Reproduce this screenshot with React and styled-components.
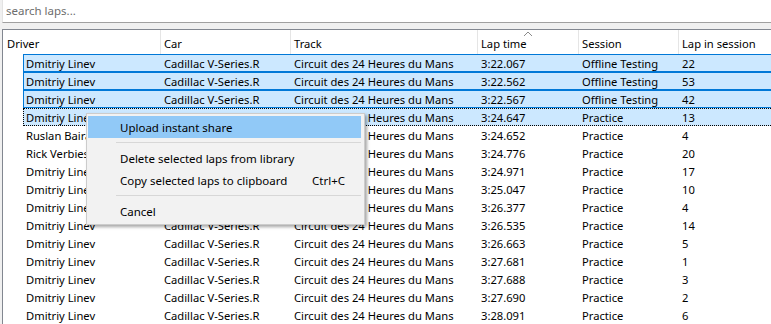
import React from "react";
import styled, { createGlobalStyle, css } from "styled-components";

const GlobalStyle = createGlobalStyle`
  html, body { margin: 0; padding: 0; }
  body {
    background: #f0f0f0;
    font-family: "Noto Sans", "Open Sans", sans-serif;
    font-size: 11.2px;
    color: #000;
    overflow: hidden;
    width: 771px;
    height: 324px;
  }
`;

const Page = styled.div`
  position: relative;
  display: flex;
  flex-direction: column;
  gap: 6px;
  width: 771px;
  height: 324px;
  overflow: hidden;
`;

const Search = styled.input`
  box-sizing: border-box;
  height: 23px;
  margin: 0 0 0 2px;
  padding: 0 3px 1px;
  border: none;
  border-left: 1px solid #e3e3e3;
  border-bottom: 1px solid #a0a0a0;
  background: #fff;
  font: inherit;
  font-size: 11.5px;
  outline: none;
  &::placeholder { color: #6d6d6d; }
`;

const Table = styled.div`
  flex: 1;
  margin-left: 2px;
  border-top: 1px solid #828790;
  border-left: 1px solid #828790;
  background: #fff;
  display: flex;
  flex-direction: column;
  min-width: 900px;
`;

const cols = (first) => `${first}px 130px 187px 101px 100px 1fr`;

const HeaderRow = styled.div`
  display: grid;
  grid-template-columns: ${cols(158)};
  height: 24px;
`;

const HeaderCell = styled.div`
  position: relative;
  display: flex;
  align-items: center;
  padding-left: ${(p) => (p.$first ? 4 : 3)}px;
  padding-top: 2px;
  border-right: 1px solid #e5e5e5;
  white-space: nowrap;
`;

const SortArrow = styled.svg`
  position: absolute;
  top: 1px;
  left: 50%;
  margin-left: -5px;
`;

const Rows = styled.div`
  display: flex;
  flex-direction: column;
  padding-left: 20px;
`;

const Row = styled.div`
  box-sizing: border-box;
  display: grid;
  grid-template-columns: ${cols(138)};
  height: 18px;
  border: 1px solid transparent;
  border-right: none;
  ${(p) =>
    p.$selected &&
    css`
      background: #cce8ff;
      border-color: #0078d7;
    `}
  ${(p) =>
    p.$focused &&
    css`
      border: 1px dotted #000;
      border-right: none;
    `}
`;

const Cell = styled.div`
  display: flex;
  align-items: center;
  padding-left: 2px;
  padding-top: 1px;
  white-space: nowrap;
  overflow: hidden;
  line-height: 15px;
`;

const Menu = styled.div`
  position: absolute;
  left: 86px;
  top: 113px;
  width: 279px;
  box-sizing: border-box;
  background: #f2f2f2;
  border: 1px solid #cccccc;
  padding: 2px 3px 2px 1px;
  box-shadow: 2px 2px 3px rgba(0, 0, 0, 0.35);
  display: flex;
  flex-direction: column;
`;

const MenuItem = styled.div`
  display: flex;
  align-items: center;
  justify-content: space-between;
  height: 22px;
  padding: 0 0 0 32px;
  font-size: 11.5px;
  background: ${(p) => (p.$active ? "#91c9f7" : "transparent")};
`;

const Shortcut = styled.span`
  width: 49px;
`;

const Separator = styled.div`
  height: 9px;
  display: flex;
  align-items: center;
  padding-left: 28px;
  &::after {
    content: "";
    flex: 1;
    height: 1px;
    background: #d7d7d7;
  }
`;

const data = [
  ["Dmitriy Linev", "3:22.067", "Offline Testing", "22", true],
  ["Dmitriy Linev", "3:22.562", "Offline Testing", "53", true],
  ["Dmitriy Linev", "3:22.567", "Offline Testing", "42", true],
  ["Dmitriy Linev", "3:24.647", "Practice", "13", true, true],
  ["Ruslan Bairamov", "3:24.652", "Practice", "4"],
  ["Rick Verbiest", "3:24.776", "Practice", "20"],
  ["Dmitriy Linev", "3:24.971", "Practice", "17"],
  ["Dmitriy Linev", "3:25.047", "Practice", "10"],
  ["Dmitriy Linev", "3:26.377", "Practice", "4"],
  ["Dmitriy Linev", "3:26.535", "Practice", "14"],
  ["Dmitriy Linev", "3:26.663", "Practice", "5"],
  ["Dmitriy Linev", "3:27.681", "Practice", "1"],
  ["Dmitriy Linev", "3:27.688", "Practice", "3"],
  ["Dmitriy Linev", "3:27.690", "Practice", "2"],
  ["Dmitriy Linev", "3:28.091", "Practice", "6"],
];

const headers = ["Driver", "Car", "Track", "Lap time", "Session", "Lap in session"];

export default function App() {
  return (
    <Page>
      <GlobalStyle />
      <Search placeholder="search laps..." />
      <Table>
        <HeaderRow>
          {headers.map((h, i) => (
            <HeaderCell key={h} $first={i === 0}>
              {h}
              {h === "Lap time" && (
                <SortArrow width="10" height="6" viewBox="0 0 10 6">
                  <path d="M1 5 L5 1 L9 5" fill="none" stroke="#8a8a8a" strokeWidth="1" />
                </SortArrow>
              )}
            </HeaderCell>
          ))}
        </HeaderRow>
        <Rows>
          {data.map(([driver, time, session, lap, sel, foc], i) => (
            <Row key={i} $selected={sel} $focused={foc}>
              <Cell>{driver}</Cell>
              <Cell>Cadillac V-Series.R</Cell>
              <Cell>Circuit des 24 Heures du Mans</Cell>
              <Cell>{time}</Cell>
              <Cell>{session}</Cell>
              <Cell>{lap}</Cell>
            </Row>
          ))}
        </Rows>
      </Table>
      <Menu>
        <MenuItem $active>Upload instant share</MenuItem>
        <Separator />
        <MenuItem>Delete selected laps from library</MenuItem>
        <MenuItem>
          Copy selected laps to clipboard<Shortcut>Ctrl+C</Shortcut>
        </MenuItem>
        <Separator />
        <MenuItem>Cancel</MenuItem>
      </Menu>
    </Page>
  );
}
